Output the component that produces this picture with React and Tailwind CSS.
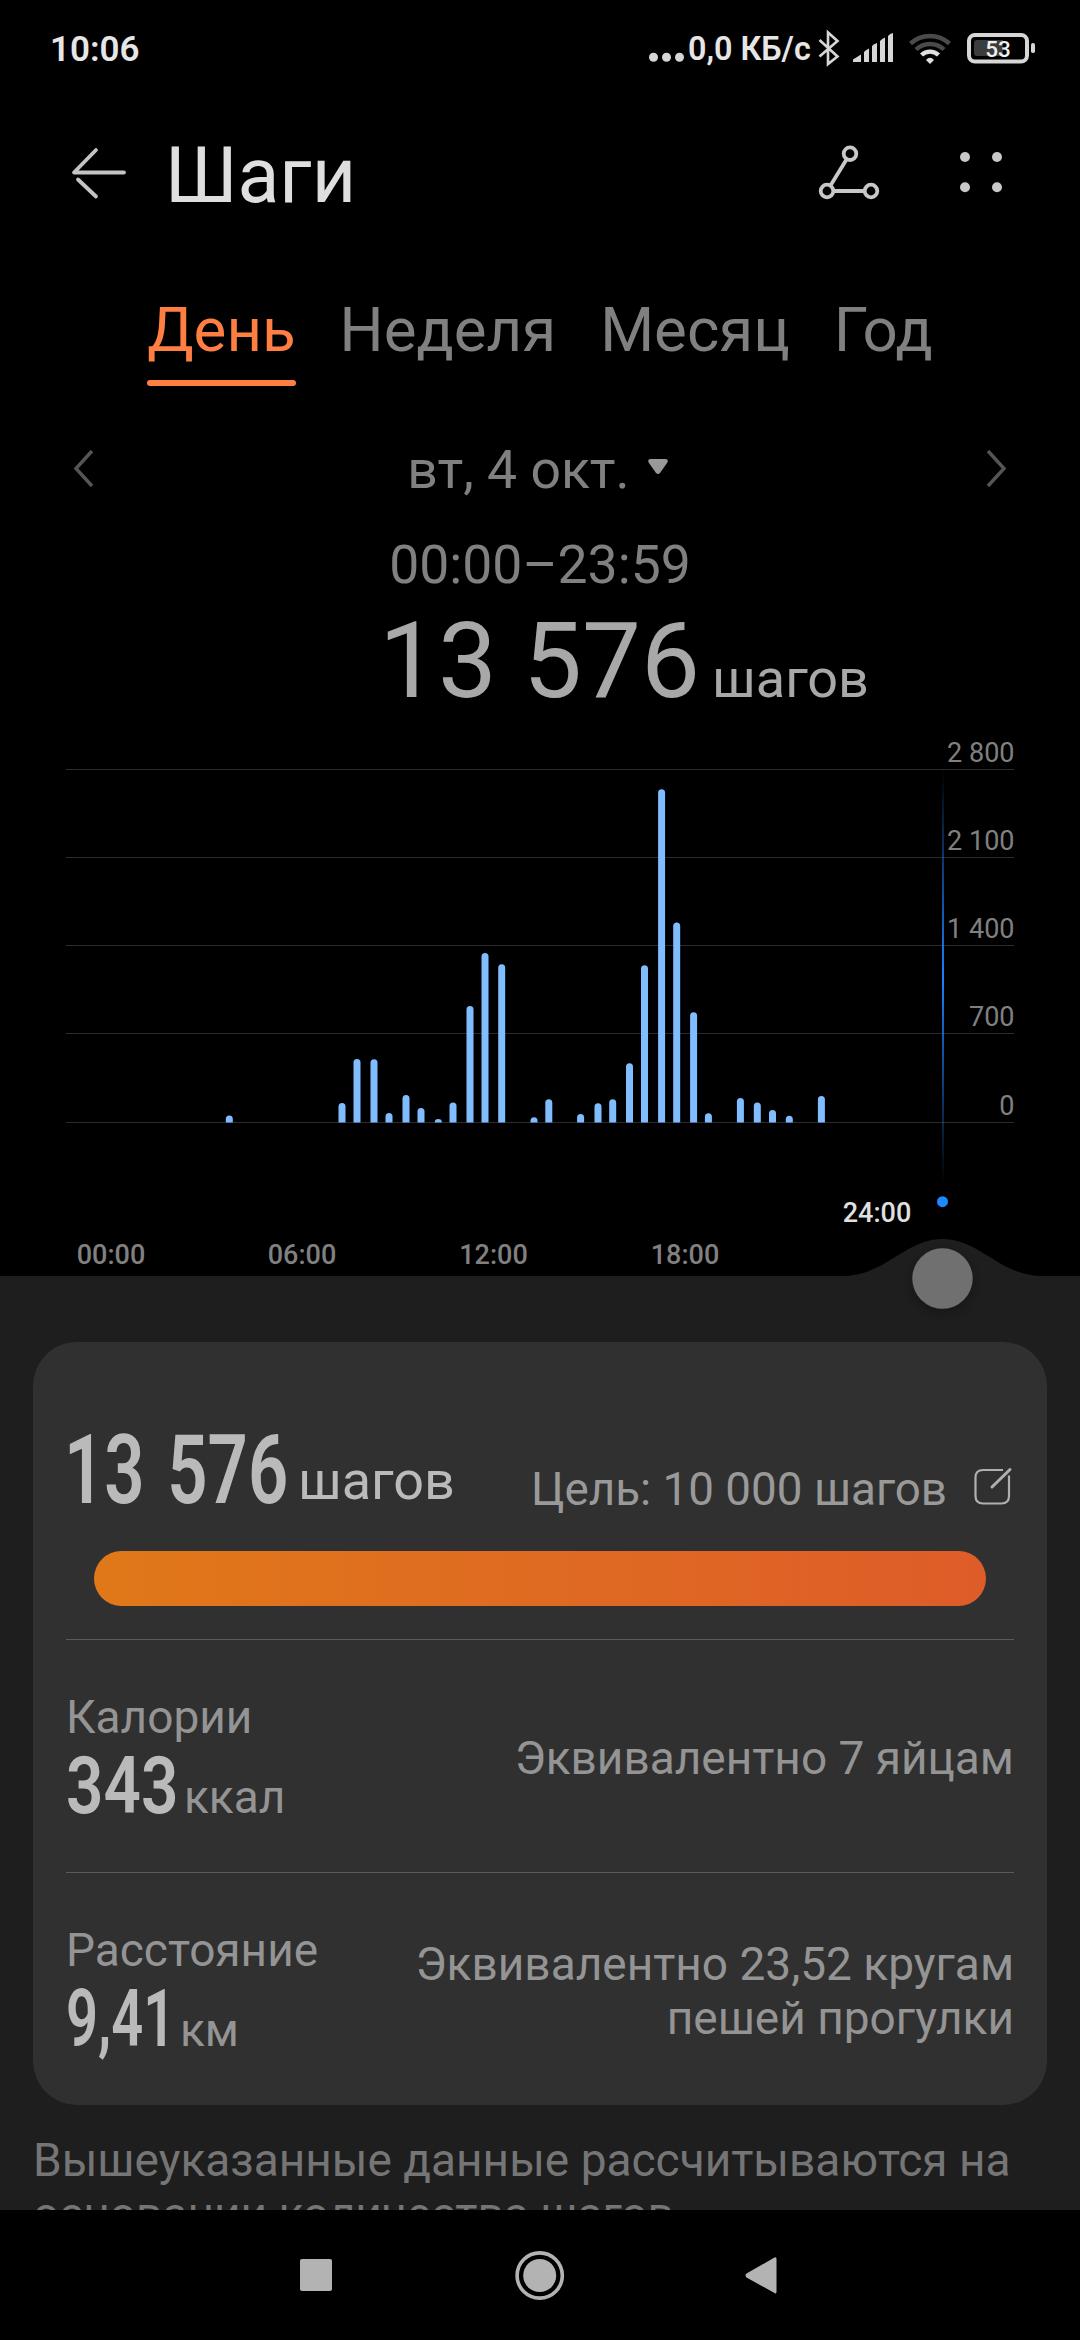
import React from "react";

const bars = [
  { x: 229.3, top: 1115.5 },
  { x: 342, top: 1103 },
  { x: 357, top: 1059 },
  { x: 374, top: 1059.3 },
  { x: 389, top: 1113 },
  { x: 406, top: 1095 },
  { x: 421, top: 1108 },
  { x: 438.3, top: 1119 },
  { x: 453, top: 1102.5 },
  { x: 470, top: 1006 },
  { x: 485, top: 953 },
  { x: 501.7, top: 964.3 },
  { x: 534, top: 1117.3 },
  { x: 548.8, top: 1099.3 },
  { x: 580.6, top: 1114 },
  { x: 598, top: 1103.3 },
  { x: 612.7, top: 1099.2 },
  { x: 629.5, top: 1063.2 },
  { x: 644.5, top: 965.2 },
  { x: 661.6, top: 789.2 },
  { x: 676.7, top: 922.5 },
  { x: 693.6, top: 1012.2 },
  { x: 708.4, top: 1113.2 },
  { x: 740.4, top: 1098 },
  { x: 757.3, top: 1102.4 },
  { x: 772.5, top: 1110 },
  { x: 789.3, top: 1115.8 },
  { x: 821.4, top: 1096 },
];

const gridLines = [
  { y: 769, label: "2 800" },
  { y: 857, label: "2 100" },
  { y: 945, label: "1 400" },
  { y: 1033, label: "700" },
  { y: 1122, label: "0" },
];

const hours = [
  { x: 111, label: "00:00" },
  { x: 302, label: "06:00" },
  { x: 493.5, label: "12:00" },
  { x: 685, label: "18:00" },
];

const tabs = ["День", "Неделя", "Месяц", "Год"];

const barPath = ({ x, top }) => {
  const r = Math.min(3.5, 1122 - top);
  return `M${x - 3.5} 1122.5V${top + r}Q${x - 3.5} ${top} ${x} ${top}Q${x + 3.5} ${top} ${x + 3.5} ${top + r}V1122.5Z`;
};

const StatusBar = () => (
  <div className="flex h-24 items-center justify-between pl-[50px] pr-[44px] text-[#e6e6e6]">
    <span className="text-[35px] leading-[40px] font-semibold pt-[3px]">10:06</span>
    <div className="flex items-center">
      <svg width="40" height="96" viewBox="648 0 40 96" fill="#d6d6d6">
        <circle cx="653.5" cy="57.3" r="4.5" />
        <circle cx="666.5" cy="57.3" r="4.5" />
        <circle cx="679.5" cy="57.3" r="4.5" />
      </svg>
      <span className="w-[124px] pt-px text-[32.3px] leading-[40px] font-semibold whitespace-nowrap">0,0 КБ/с</span>
      <svg width="224" height="96" viewBox="812 0 224 96">
        <path
          d="M819.5 40L837.5 56.5L828 64V32.5L837.5 41L819.5 56.5"
          fill="none"
          stroke="#d6d6d6"
          strokeWidth="2.6"
        />
        <g fill="#d6d6d6">
          <path d="M853 62V59.5L861 54.5V62Z" />
          <path d="M864 62V52Q866 49.5 869 48.5V62Z" />
          <path d="M872 62V46Q874 44 877 43V62Z" />
          <path d="M880 62V41Q882 38.5 885 37.5V62Z" />
          <path d="M888 62V36Q890 33.5 893 33V62Z" />
        </g>
        <g fill="none" strokeWidth="4.4">
          <path d="M910.5 43.5A29 29 0 0 1 949.5 43.5" stroke="#4a4a4a" />
          <path d="M916 49.5A20.5 20.5 0 0 1 944 49.5" stroke="#4a4a4a" />
          <path d="M921.5 55A12.5 12.5 0 0 1 938.5 55" stroke="#e0e0e0" />
        </g>
        <path d="M926 60Q930 55.5 934 60L930 64Z" fill="#e0e0e0" />
        <rect x="969" y="35" width="58" height="26.5" rx="6" fill="none" stroke="#d6d6d6" strokeWidth="4" />
        <path d="M977 40H1003V56H977Q974 56 974 53V43Q974 40 977 40Z" fill="#3c3c3c" />
        <rect x="1031" y="43" width="4" height="10" rx="1.8" fill="#d6d6d6" />
        <text x="998" y="56.8" fontSize="22.5" fontWeight="500" fill="#f0f0f0" textAnchor="middle">
          53
        </text>
      </svg>
    </div>
  </div>
);

const Header = () => (
  <div className="flex h-[164px] items-start justify-between pl-[66px] pr-[76px] pt-[32px]">
    <div className="flex">
      <svg width="66" height="90" viewBox="66 128 66 90" fill="none" stroke="#c4c4c4" strokeWidth="3.8" strokeLinecap="round">
        <path d="M96 150L74 172.5H124" strokeLinejoin="round" />
        <path d="M78 179.5L96 196.5" />
      </svg>
      <h1 className="ml-[33px] text-[77px] leading-[96px] text-[#dedede]">Шаги</h1>
    </div>
    <svg width="190" height="90" viewBox="814 128 190 90">
      <g fill="none" stroke="#c8c8c8" strokeWidth="3.8">
        <circle cx="850" cy="153.7" r="6.3" />
        <circle cx="827" cy="191" r="6.3" />
        <circle cx="871" cy="191" r="6.3" />
        <path d="M846.5 159.5L830.5 185.5M833.5 191H864.5" />
      </g>
      <g fill="#c8c8c8">
        <circle cx="965" cy="157" r="5" />
        <circle cx="997" cy="157" r="5" />
        <circle cx="965" cy="187.3" r="5" />
        <circle cx="997" cy="187.3" r="5" />
      </g>
    </svg>
  </div>
);

const Tabs = () => (
  <div className="flex h-[162px] justify-center gap-[44px] pt-[30px] text-[61.8px] leading-[80px] text-[#808080]">
    {tabs.map((tab, i) => (
      <div key={tab} className={i === 0 ? "flex flex-col text-[#ff7f42]" : "flex flex-col"}>
        <span>{tab}</span>
        {i === 0 && <span className="mt-[10px] h-[6px] rounded-full bg-[#ff7f42]" />}
      </div>
    ))}
  </div>
);

const DateNav = () => (
  <div className="flex h-[100px] items-center justify-between px-[72px] pb-[4px] text-[#808080]">
    <svg width="24" height="44" viewBox="0 0 24 44" fill="none" stroke="#555" strokeWidth="3.4">
      <path d="M20 3L4 20.5L20 38" />
    </svg>
    <div className="mr-[5px] flex items-center gap-[18px] text-[53.5px] leading-[64px]">
      <span>вт, 4 окт.</span>
      <svg width="20" height="16" viewBox="0 0 20 16" className="mb-[6px]" fill="#999">
        <path d="M2 0H18Q21 1 19 4L12 14Q10 16 8 14L1 4Q-1 1 2 0Z" />
      </svg>
    </div>
    <svg width="24" height="44" viewBox="0 0 24 44" fill="none" stroke="#555" strokeWidth="3.4">
      <path d="M4 3L20 20.5L4 38" />
    </svg>
  </div>
);

const Chart = () => (
  <svg width="1080" height="610" viewBox="0 730 1080 610" className="block" fontFamily="Roboto, sans-serif">
    <defs>
      <linearGradient id="cursor" x1="0" y1="0" x2="0" y2="1">
        <stop offset="0" stopColor="#1e80ff" stopOpacity="0" />
        <stop offset="0.5" stopColor="#1e80ff" />
        <stop offset="1" stopColor="#1e80ff" stopOpacity="0" />
      </linearGradient>
      <filter id="knobShadow" x="-50%" y="-50%" width="200%" height="200%">
        <feDropShadow dx="0" dy="4" stdDeviation="7" floodColor="#000" floodOpacity="0.3" />
      </filter>
    </defs>
    {gridLines.map((line) => (
      <g key={line.label}>
        <rect x="66" y={line.y} width="948" height="1" fill="#2b2b2b" />
        <text x="1014.5" y={line.y - 7} fontSize="27" fill="#808080" textAnchor="end">
          {line.label}
        </text>
      </g>
    ))}
    {bars.map((bar) => (
      <path key={bar.x} d={barPath(bar)} fill="#80bdff" />
    ))}
    {hours.map((hour) => (
      <text key={hour.label} x={hour.x} y="1264" fontSize="27" fontWeight="500" fill="#808080" textAnchor="middle">
        {hour.label}
      </text>
    ))}
    <text x="877" y="1222" fontSize="27" fontWeight="500" fill="#e0e0e0" textAnchor="middle">
      24:00
    </text>
    <rect x="942" y="770" width="2" height="414" fill="url(#cursor)" />
    <circle cx="942.5" cy="1201.7" r="5.5" fill="#1e88ff" />
    <path d="M0 1276H843C885 1276 905 1239 942.5 1239C980 1239 1000 1276 1042 1276H1080V1340H0Z" fill="#1e1e1e" />
    <circle cx="942.5" cy="1278.5" r="30.2" fill="#707070" filter="url(#knobShadow)" />
  </svg>
);

const Summary = () => (
  <div className="h-[297px]">
    <div className="flex h-[168px] justify-between">
      <div className="flex items-start pt-[78px]">
        <span className="-ml-[2px] w-[234px] text-[96px] leading-[100px] font-semibold whitespace-nowrap text-[#bababa]">
          <span className="inline-block origin-left scale-x-[0.735] [word-spacing:7px]">13 576</span>
        </span>
        <span className="mt-[29px] text-[54px] leading-[64px] text-[#bababa]">шагов</span>
      </div>
      <div className="flex items-start pt-[121px]">
        <span className="text-[45.8px] leading-[54px] text-[#999]">Цель: 10 000 шагов</span>
        <svg width="44" height="44" viewBox="970 1464 44 44" className="ml-[23px] mt-[1px]" fill="none" stroke="#b0b0b0" strokeWidth="2.2">
          <path d="M1003 1470H983Q975.5 1470 975.5 1477.5V1496Q975.5 1503.5 983 1503.5H1001.5Q1009 1503.5 1009 1496V1475.5" />
          <path d="M992 1487L1010 1469.5" strokeWidth="3" strokeLinecap="round" />
        </svg>
      </div>
    </div>
    <div className="mx-[28px] mt-[41px] h-[55px] rounded-full bg-linear-to-r from-[#e07818] to-[#de5c28]" />
  </div>
);

const Metric = ({ label, unit, children, note }) => (
  <div className="flex h-[233px] items-center justify-between border-t border-[#5a5a5a]">
    <div className="mt-[17px]">
      <p className="text-[46px] leading-[54px] text-[#949494]">{label}</p>
      <div className="flex items-baseline text-[79px] leading-[85px] font-semibold text-[#bababa]">
        {children}
        <span className="text-[46px] font-normal text-[#949494]">{unit}</span>
      </div>
    </div>
    <p className="mt-[3px] text-right text-[46px] leading-[54px] text-[#949494]">{note}</p>
  </div>
);

const NavBar = () => (
  <div className="h-[130px] bg-black">
    <svg width="1080" height="130" viewBox="0 2210 1080 130" fill="#b3b3b3">
      <rect x="300" y="2259" width="32" height="32" rx="2" />
      <circle cx="539.7" cy="2275.5" r="22.6" fill="none" stroke="#b3b3b3" strokeWidth="3.6" />
      <circle cx="539.7" cy="2275.5" r="16.5" />
      <path d="M774.5 2257.5Q776.5 2256.5 776.5 2259V2291.5Q776.5 2294.5 774.5 2293L746.5 2277.5Q744.5 2275.5 746.5 2273.5Z" />
    </svg>
  </div>
);

export default function App() {
  return (
    <div className="flex h-[2340px] w-[1080px] flex-col overflow-hidden bg-black font-[Roboto,sans-serif]">
      <StatusBar />
      <Header />
      <Tabs />
      <DateNav />
      <div className="h-[208px] shrink-0 pt-[11px]">
        <p className="text-center text-[53.5px] leading-[64px] text-[#808080]">00:00–23:59</p>
        <div className="mt-[4px] flex items-baseline pl-[379px] text-[105px] leading-[122px] text-[#a8a8a8]">
          13 576
          <span className="ml-[12px] text-[54px]">шагов</span>
        </div>
      </div>
      <Chart />
      <div className="flex h-[870px] shrink-0 flex-col overflow-hidden bg-[#1e1e1e] px-[33px] pt-[2px]">
        <div className="h-[763px] shrink-0 rounded-[44px] bg-[#303030] px-[33px]">
          <Summary />
          <Metric label="Калории" unit="ккал" note="Эквивалентно 7 яйцам">
            <span className="w-[118px]">
              <span className="inline-block origin-left scale-x-[0.83]">343</span>
            </span>
          </Metric>
          <Metric
            label="Расстояние"
            unit="км"
            note={
              <>
                Эквивалентно 23,52 кругам
                <br />
                пешей прогулки
              </>
            }
          >
            <span className="w-[114px]">
              <span className="inline-block origin-left scale-x-[0.71]">9,41</span>
            </span>
          </Metric>
        </div>
        <p className="mt-[28px] text-[46px] leading-[54px] text-[#757575]">
          Вышеуказанные данные рассчитываются на основании количества шагов.
        </p>
      </div>
      <NavBar />
    </div>
  );
}
